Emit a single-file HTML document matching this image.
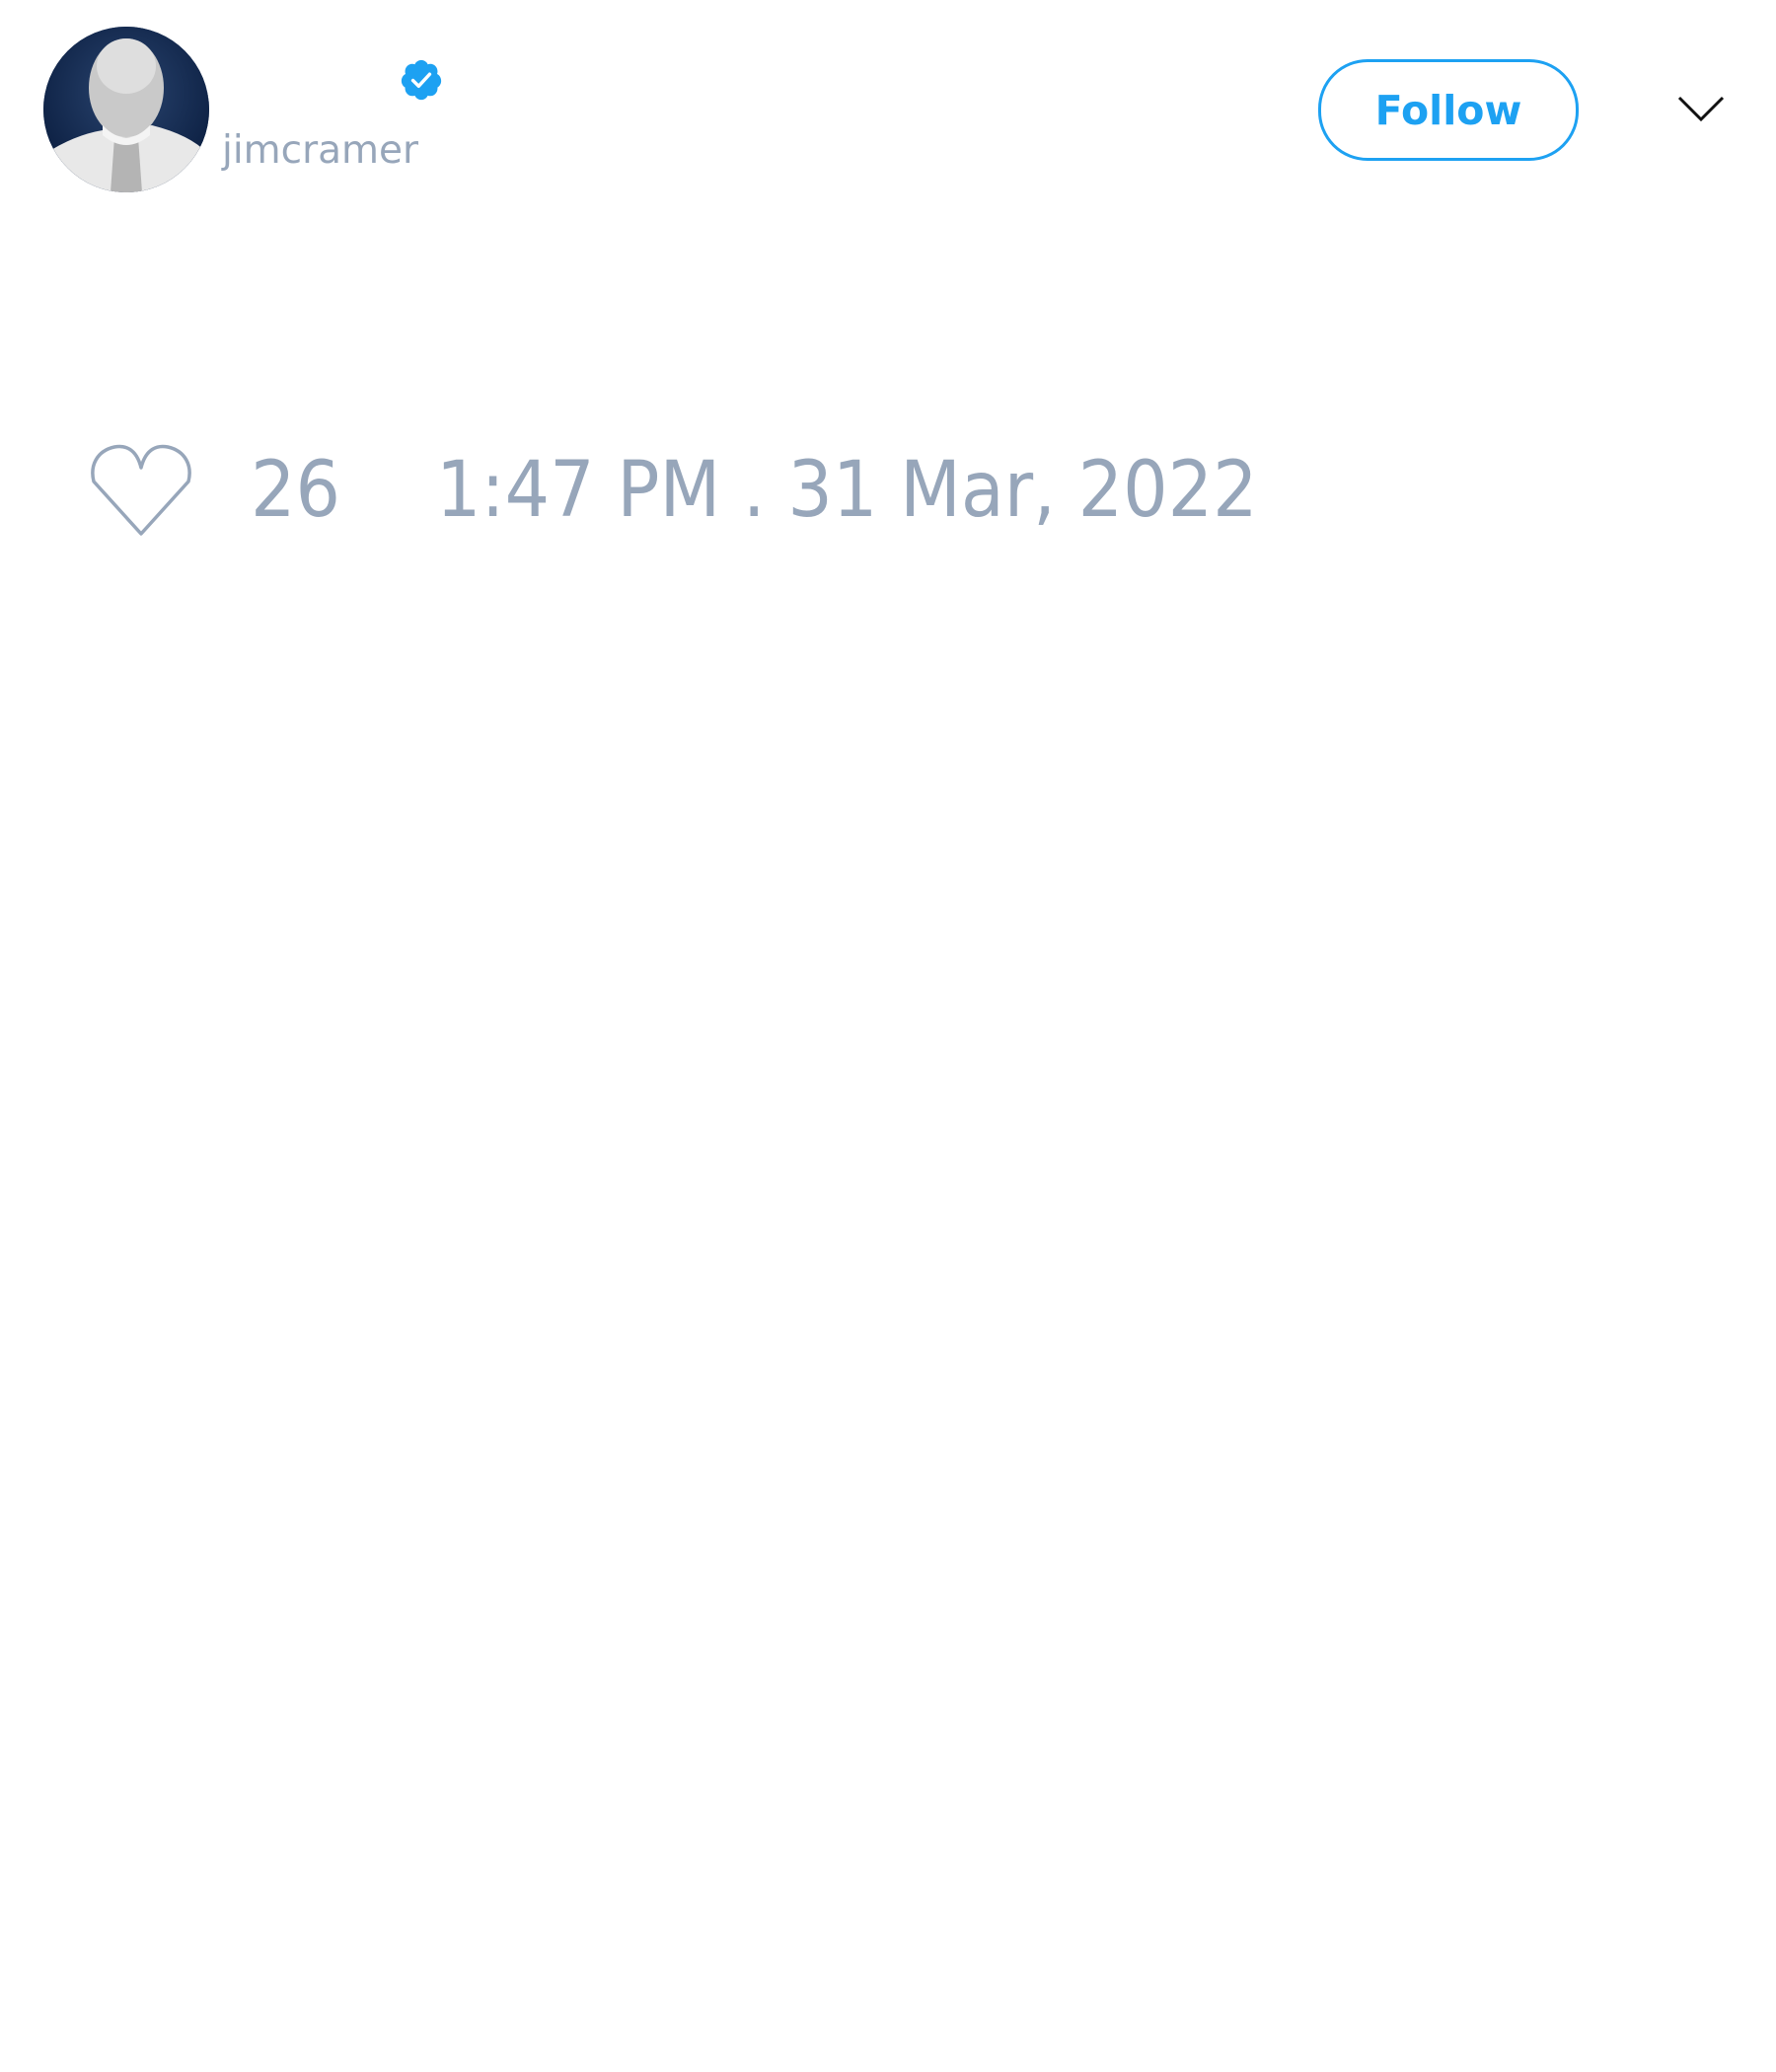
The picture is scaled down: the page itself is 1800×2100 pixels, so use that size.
<!DOCTYPE html>
<html><head><meta charset="utf-8"><style>
html,body{margin:0;padding:0;background:#fff;width:1800px;height:2100px;overflow:hidden;font-family:"DejaVu Sans","Liberation Sans",sans-serif}
.abs{position:absolute}
.av{left:44px;top:27px;width:168px;height:168px;border-radius:50%;overflow:hidden;background:#0d2447}
.handle{left:225px;top:133px;font-size:39px;color:#97a6ba;line-height:1;white-space:nowrap}
.follow{left:1336px;top:60px;width:258px;height:97px;border:3px solid #1da1f2;border-radius:50px;color:#1da1f2;font-weight:bold;font-size:41px;display:flex;align-items:center;justify-content:center}
.stat{color:#97a6ba;font-size:78px;line-height:1;white-space:nowrap;transform:scaleX(0.917);transform-origin:left top}
</style></head><body>
<div class="abs av">
<svg width="168" height="168" viewBox="0 0 168 168">
<defs><radialGradient id="bg" cx="0.5" cy="0.4" r="0.7"><stop offset="0" stop-color="#2a4570"/><stop offset="1" stop-color="#07193a"/></radialGradient></defs>
<rect width="168" height="168" fill="url(#bg)"/>
<path d="M150 30 Q165 50 168 80 L168 40Z" fill="#9fb0c8" opacity=".6"/>
<path d="M0 130 Q30 110 60 105 L110 100 Q150 110 168 130 L168 168 L0 168Z" fill="#e8e8e8"/>
<ellipse cx="84" cy="62" rx="38" ry="50" fill="#c9c9c9"/>
<ellipse cx="84" cy="40" rx="30" ry="28" fill="#dedede"/>
<path d="M72 112 L96 112 L100 168 L68 168Z" fill="#b4b4b4"/>
<path d="M60 100 Q84 125 108 100 L108 110 Q84 130 60 110Z" fill="#f4f4f4"/>
</svg></div>
<svg class="abs" style="left:404px;top:58px" width="46" height="46" viewBox="0 0 24 24"><path fill="#1da1f2" d="M22.5 12.5c0-1.58-.875-2.95-2.148-3.6.154-.435.238-.905.238-1.4 0-2.21-1.71-3.998-3.818-3.998-.47 0-.92.084-1.336.25C14.818 2.415 13.51 1.5 12 1.5s-2.816.917-3.437 2.25c-.415-.165-.866-.25-1.336-.25-2.11 0-3.818 1.79-3.818 4 0 .494.083.964.237 1.4-1.272.65-2.147 2.018-2.147 3.6 0 1.495.782 2.798 1.942 3.486-.02.17-.032.34-.032.514 0 2.21 1.708 4 3.818 4 .47 0 .92-.086 1.335-.25.62 1.334 1.926 2.25 3.437 2.25 1.512 0 2.818-.916 3.437-2.25.415.163.865.248 1.336.248 2.11 0 3.818-1.79 3.818-4 0-.174-.012-.344-.033-.513 1.158-.687 1.943-1.99 1.943-3.484z"/><path d="M7.6 12.3l3 3 5.8-6.3" stroke="#fff" stroke-width="1.8" fill="none" stroke-linecap="round" stroke-linejoin="round"/></svg>
<div class="abs handle">jimcramer</div>
<div class="abs follow">Follow</div>
<svg class="abs" style="left:1700px;top:96px" width="48" height="30" viewBox="0 0 48 30"><path d="M2 3 L24 25 L46 3" stroke="#111" stroke-width="3" fill="none"/></svg>
<svg class="abs" style="left:88px;top:448px" width="110" height="98" viewBox="0 0 110 98"><path d="M55 26 C50 6 38 3 28 5 C10 9 3 24 7 40 L55 93 L103 40 C107 24 100 9 82 5 C72 3 60 6 55 26Z" stroke="#97a6ba" stroke-width="3.5" fill="none" stroke-linejoin="round"/></svg>
<div class="abs stat" style="left:254px;top:458px">26</div>
<div class="abs stat" style="left:442px;top:458px">1:47 PM . 31 Mar, 2022</div>
</body></html>
